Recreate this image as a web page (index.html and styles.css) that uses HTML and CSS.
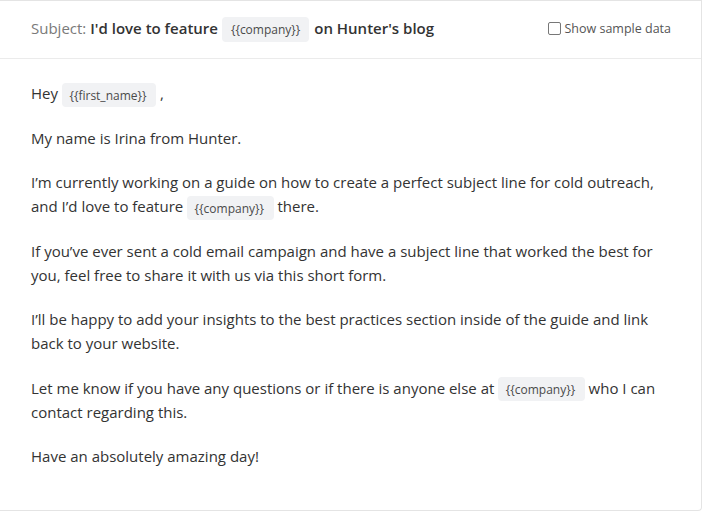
FILE: index.html
```html
<!DOCTYPE html>
<html>
<head>
<meta charset="utf-8">
<link rel="stylesheet" href="styles.css">
</head>
<body>
<div class="card">
  <div class="header">
    <div class="subject">
      <span class="label">Subject:</span>
      <span class="title">I'd love to feature <span class="tag">{{company}}</span> on Hunter's blog</span>
    </div>
    <label class="sample"><span class="box"></span>Show sample data</label>
  </div>
  <div class="body">
    <p>Hey <span class="tag">{{first_name}}</span> ,</p>
    <p>My name is Irina from Hunter.</p>
    <p>I’m currently working on a guide on how to create a perfect subject line for cold outreach, and I’d love to feature <span class="tag">{{company}}</span> there.</p>
    <p>If you’ve ever sent a cold email campaign and have a subject line that worked the best for you, feel free to share it with us via this short form.</p>
    <p>I’ll be happy to add your insights to the best practices section inside of the guide and link back to your website.</p>
    <p>Let me know if you have any questions or if there is anyone else at <span class="tag">{{company}}</span> who I can contact regarding this.</p>
    <p>Have an absolutely amazing day!</p>
  </div>
</div>
</body>
</html>
```
FILE: styles.css
```css
html, body {
  margin: 0;
  padding: 0;
  background: #ffffff;
}
body {
  font-family: "Open Sans", "Liberation Sans", sans-serif;
  color: #333333;
  width: 706px;
  height: 516px;
  overflow: hidden;
}
.card {
  width: 702px;
  height: 511px;
  border: 1px solid #e4e4e4;
  border-left: none;
  border-radius: 0 0 4px 0;
  box-sizing: border-box;
  background: #ffffff;
}
.header {
  height: 58px;
  border-bottom: 1px solid #ebebeb;
  box-sizing: border-box;
  display: flex;
  align-items: center;
  justify-content: space-between;
  padding: 0 30px 3px 31px;
}
.subject {
  display: flex;
  align-items: center;
  font-size: 15px;
}
.label {
  color: #7a7a7a;
  margin-right: 4px;
}
.title {
  font-weight: 600;
  color: #333;
  font-size: 15px;
}
.tag {
  background: #f1f2f4;
  color: #4a4a4a;
  font-size: 12px;
  font-weight: 400;
  line-height: 1;
  padding: 3.5px 9.5px 3.5px 7.5px;
  border-radius: 4px;
}
.title .tag {
  font-size: 12px;
  padding: 4px 9px;
  margin-right: 1px;
}
.sample {
  display: flex;
  align-items: center;
  font-size: 12.5px;
  color: #555;
}
.box {
  width: 11px;
  height: 11px;
  border: 1px solid #777;
  border-radius: 2px;
  margin-right: 3px;
}
.body {
  padding: 22px 31px 0 31px;
  font-size: 15px;
  line-height: 24px;
}
.body p {
  margin: 0 0 20.5px 0;
}
```
